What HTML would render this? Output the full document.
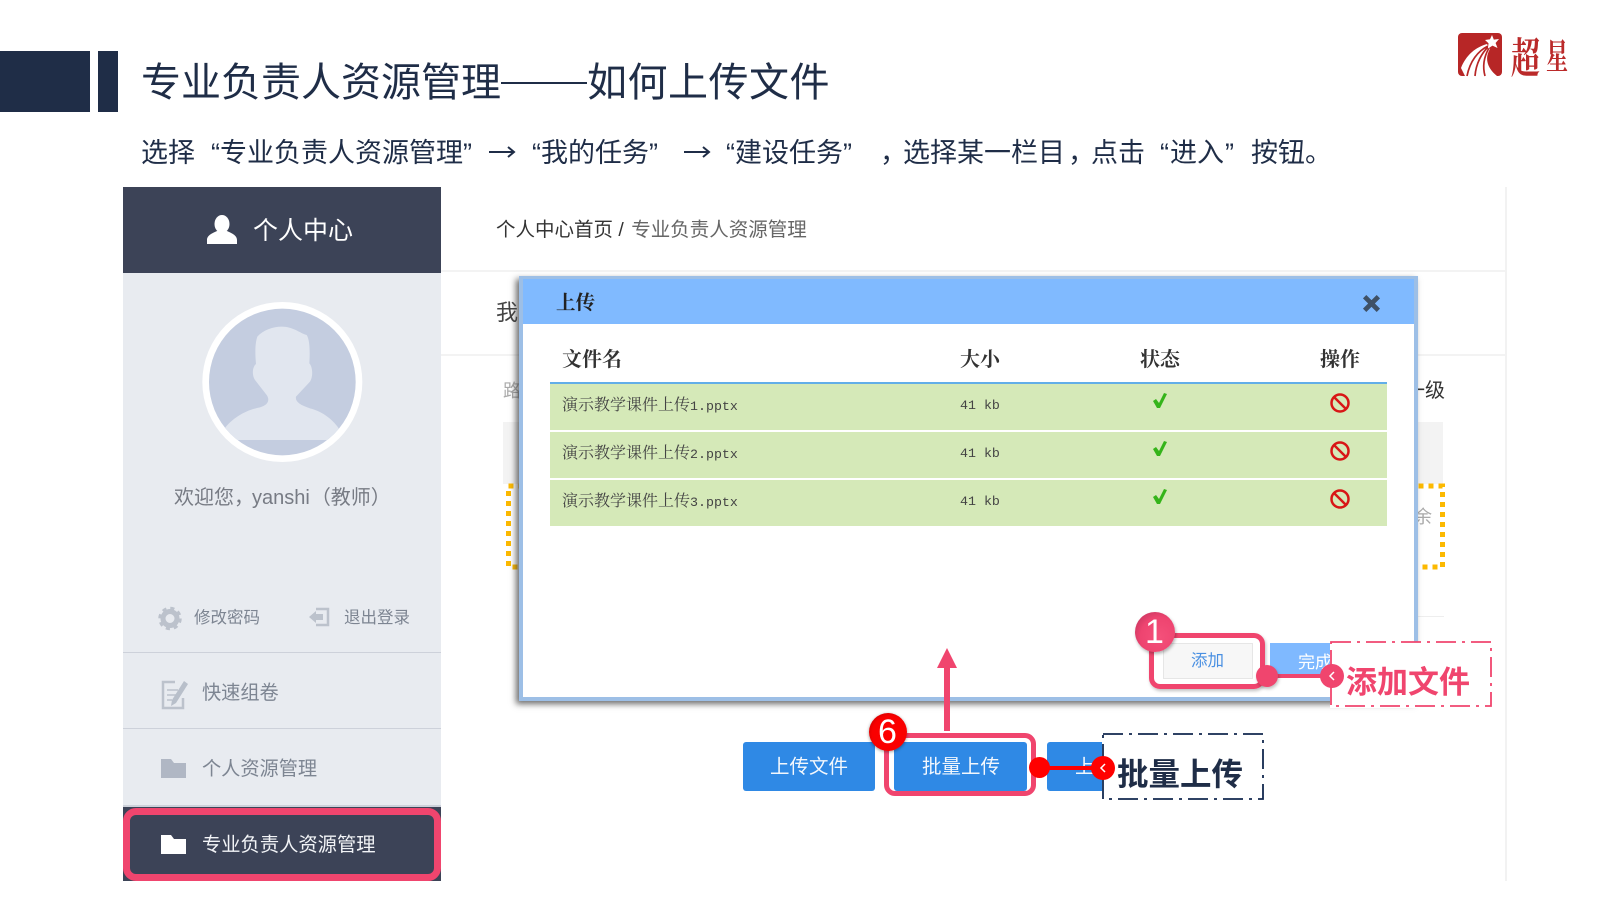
<!DOCTYPE html>
<html lang="zh">
<head>
<meta charset="utf-8">
<title>专业负责人资源管理——如何上传文件</title>
<style>
html,body{margin:0;padding:0;background:#fff}
#p{position:relative;width:1600px;height:900px;overflow:hidden;background:#fff;font-family:"Liberation Sans","Noto Sans CJK SC",sans-serif}
.t{position:absolute;white-space:nowrap;line-height:1}
.b{position:absolute}
svg{position:absolute;overflow:visible}
.th{font-family:"Noto Serif CJK SC",serif;font-weight:700;font-size:20px;color:#333}
.td{font-family:"Noto Serif CJK SC",serif;font-size:16px;color:#444}
.td i{font-style:normal;font-family:"Liberation Mono",monospace;font-size:13.3px}
.sub{font-size:27px;color:#1f2d47;font-weight:400}
</style>
</head>
<body>
<div id="p">
<div class="b" style="left:0;top:51px;width:90px;height:61px;background:#1f2d47"></div>
<div class="b" style="left:98px;top:51px;width:20px;height:61px;background:#1f2d47"></div>
<div class="t" style="left:141px;top:63px;font-size:40px;color:#1f2d47">专业负责人资源管理</div>
<div class="b" style="left:501px;top:82px;width:86px;height:2px;background:#1f2d47"></div>
<div class="t" style="left:587px;top:63px;font-size:40px;color:#1f2d47;letter-spacing:.5px">如何上传文件</div>

<div class="t sub" style="left:141px;top:140px">选择</div>
<div class="t sub" style="left:211px;top:140px">“专业负责人资源管理”</div>
<div class="t sub" style="left:532px;top:140px">“我的任务”</div>
<div class="t sub" style="left:726px;top:140px">“建设任务”</div>
<div class="t sub" style="left:880px;top:140px">，</div>
<div class="t sub" style="left:903px;top:140px">选择某一栏目</div>
<div class="t sub" style="left:1068px;top:140px">，</div>
<div class="t sub" style="left:1091px;top:140px">点击</div>
<div class="t sub" style="left:1160px;top:140px">“</div>
<div class="t sub" style="left:1170px;top:140px">进入</div>
<div class="t sub" style="left:1225px;top:140px">”</div>
<div class="t sub" style="left:1251px;top:140px">按钮。</div>
<svg style="left:0;top:0" width="1600" height="900" viewBox="0 0 1600 900">
<path d="M489 152H514M508 147L514 152L508 157" fill="none" stroke="#1f2d47" stroke-width="2"/>
<path d="M684 152H709M703 147L709 152L703 157" fill="none" stroke="#1f2d47" stroke-width="2"/>
</svg>

<!-- logo -->
<svg style="left:1458px;top:33px" width="44" height="43" viewBox="0 0 44 43">
<rect width="44" height="43" rx="4" fill="#b72626"/>
<path d="M3 35C8 22 18 14 29 11L32 16C27 24 28 34 39 43H7Z" fill="#fff"/>
<path d="M30 13C20 18 12 28 9 43M30 14C24 20 18 30 17 43M31 15C27 22 24 32 27 43" fill="none" stroke="#b72626" stroke-width="1.700"/>
<path d="M34 2L35.800 6.600 41 6 37.600 10 39.500 15 34.500 12.600 30 15.500 30.500 10.300 27 7 32 6.300Z" fill="#fff"/>
</svg>
<div class="t" style="left:1511px;top:42px;font-family:'Noto Serif CJK SC',serif;font-weight:700;font-size:29px;color:#bb2a2a;transform:scaleY(1.45);transform-origin:50% 50%">超</div>
<div class="t" style="left:1546px;top:45px;font-family:'Noto Serif CJK SC',serif;font-weight:700;font-size:22px;color:#bb2a2a;transform:scaleY(1.6);transform-origin:50% 50%">星</div>

<!-- content frame -->
<div class="b" style="left:441px;top:270px;width:1064px;height:2px;background:#f3f3f3"></div>
<div class="b" style="left:441px;top:354px;width:1064px;height:2px;background:#f3f3f3"></div>
<div class="b" style="left:1505px;top:187px;width:2px;height:694px;background:#f2f2f2"></div>
<div class="t" style="left:496px;top:221px;font-size:19.500px;color:#333">个人中心首页 / <span style="color:#666;margin-left:2px">专业负责人资源管理</span></div>
<div class="t" style="left:496px;top:302px;font-size:22px;color:#444">我的任务</div>
<div class="t" style="left:503px;top:382px;font-size:18px;color:#aaa">路径</div>
<div class="t" style="left:1405px;top:381px;font-size:20px;color:#333">一级</div>
<div class="b" style="left:503px;top:422px;width:940px;height:62px;background:#f3f3f3"></div>
<svg style="left:0;top:0" width="1600" height="900" viewBox="0 0 1600 900"><rect x="508.500" y="486" width="934" height="81" fill="none" stroke="#fcb900" stroke-width="5" stroke-dasharray="5 5"/></svg>
<div class="t" style="left:1414px;top:508px;font-size:18px;color:#aaa">余</div>
<div class="b" style="left:1418px;top:616px;width:26px;height:1px;background:#eee"></div>

<!-- sidebar -->
<div class="b" style="left:123px;top:187px;width:318px;height:694px;background:#e8ebf0"></div>
<div class="b" style="left:123px;top:187px;width:318px;height:86px;background:#3c4357"></div>
<svg style="left:0;top:0" width="1600" height="900" viewBox="0 0 1600 900">
<ellipse cx="222" cy="224" rx="7.500" ry="9" fill="#fff"/>
<path d="M207 244V240C207 235 213 233 217 231H227C231 233 237 235 237 240V244Z" fill="#fff"/>
</svg>
<div class="t" style="left:253px;top:219px;font-size:25px;color:#fff">个人中心</div>

<svg style="left:120px;top:180px" width="400" height="350" viewBox="0 0 1200 1050">
<defs><clipPath id="c"><circle cx="487" cy="606" r="220"/></clipPath></defs>
<circle cx="487" cy="606" r="240" fill="#fff"/>
<circle cx="487" cy="606" r="220" fill="#c4cde0"/>
<path clip-path="url(#c)" d="M485 440C520 440 540 460 560 465C570 480 570 520 568 550C578 560 580 590 570 605L528 650C525 665 540 675 570 685C610 695 640 720 660 750L660 780H310L310 750C340 710 380 690 420 682C445 675 450 660 440 645L405 600C395 585 397 560 408 552C405 520 405 490 412 470C430 450 460 440 485 440Z" fill="#e1e6ef"/>
</svg>
<div class="t" style="left:174px;top:488px;font-size:20px;color:#777b84">欢迎您，<span style="margin-left:-2px">yanshi</span><span style="margin-left:1px">（教师）</span></div>

<svg style="left:0;top:0" width="1600" height="900" viewBox="0 0 1600 900">
<circle cx="170" cy="618.500" r="7" fill="none" stroke="#bcc2cc" stroke-width="5"/>
<circle cx="170" cy="618.500" r="10" fill="none" stroke="#bcc2cc" stroke-width="3.500" stroke-dasharray="4 3.850"/>
<path d="M316 609H328V625H316" fill="none" stroke="#bcc2cc" stroke-width="2.500"/>
<path d="M309 617L316 611V614H323V620H316V623Z" fill="#bcc2cc"/>
<path d="M175 682H163V708H183V698" fill="none" stroke="#bcc2cc" stroke-width="2.500"/>
<path d="M167 690H178M167 695H176M167 700H172" stroke="#bcc2cc" stroke-width="1.500"/>
<path d="M175 682L183 682 183 688Z" fill="#e8ebf0"/>
<path d="M188 684L176 703L171 706L172 700L184 681Z" fill="#b8bfca"/>
<path d="M161 759H171L174 763H186V778H161Z" fill="#b0b7c4"/>
</svg>
<div class="t" style="left:194px;top:610px;font-size:16.500px;color:#7d8592">修改密码</div>
<div class="t" style="left:344px;top:610px;font-size:16.500px;color:#7d8592">退出登录</div>
<div class="b" style="left:123px;top:652px;width:318px;height:1px;background:#cdd1da"></div>
<div class="t" style="left:202px;top:684px;font-size:19.200px;color:#7d8592">快速组卷</div>
<div class="b" style="left:123px;top:728px;width:318px;height:1px;background:#cdd1da"></div>
<div class="t" style="left:202px;top:760px;font-size:19.200px;color:#7d8592">个人资源管理</div>
<div class="b" style="left:123px;top:805px;width:318px;height:2px;background:#cdd1da"></div>
<div class="b" style="left:123px;top:807px;width:318px;height:74px;background:#3c4357"></div>
<div class="b" style="left:123px;top:808px;width:318px;height:73px;box-sizing:border-box;border:7px solid #f0456e;border-radius:13px"></div>
<svg style="left:0;top:0" width="1600" height="900" viewBox="0 0 1600 900">
<path d="M161 835H171L174 839H186V854H161Z" fill="#fff"/>
</svg>
<div class="t" style="left:202px;top:836px;font-size:19.300px;color:#f2f4f7">专业负责人资源管理</div>

<!-- dialog -->
<div class="b" style="left:519px;top:276px;width:899px;height:425px;box-sizing:border-box;border:4px solid #9dbfe6;background:#fff;box-shadow:-3px 3px 6px rgba(60,60,60,.75)"></div>
<div class="b" style="left:523px;top:279px;width:891px;height:45px;background:#80baff"></div>
<div class="t" style="left:556px;top:292px;font-size:19.500px;color:#222;font-family:'Noto Serif CJK SC',serif;font-weight:700">上传</div>
<svg style="left:1362px;top:294px" width="19" height="19" viewBox="0 0 18 18"><path d="M2.500 2.500L15.500 15.500M15.500 2.500L2.500 15.500" stroke="#3f5166" stroke-width="4.500"/></svg>
<div class="t th" style="left:563px;top:348px;margin-left:-1px">文件名</div>
<div class="t th" style="left:960px;top:348px">大小</div>
<div class="t th" style="left:1140px;top:348px">状态</div>
<div class="t th" style="left:1320px;top:348px">操作</div>
<div class="b" style="left:550px;top:382px;width:837px;height:2px;background:#62aee8"></div>
<div class="b" style="left:550px;top:384px;width:837px;height:46px;background:#d5e9b8"></div>
<div class="b" style="left:550px;top:431.500px;width:837px;height:46.500px;background:#d5e9b8"></div>
<div class="b" style="left:550px;top:479.500px;width:837px;height:46.500px;background:#d5e9b8"></div>
<div class="t td" style="left:562px;top:396px">演示教学课件上传<i>1.pptx</i></div>
<div class="t td" style="left:562px;top:444px">演示教学课件上传<i>2.pptx</i></div>
<div class="t td" style="left:562px;top:492px">演示教学课件上传<i>3.pptx</i></div>
<div class="t td" style="left:960px;top:395px"><i>41&nbsp;kb</i></div>
<div class="t td" style="left:960px;top:443px"><i>41&nbsp;kb</i></div>
<div class="t td" style="left:960px;top:491px"><i>41&nbsp;kb</i></div>
<svg style="left:0;top:0" width="1600" height="900" viewBox="0 0 1600 900">
<g>
<path d="M1153 401L1156 399L1159 403L1164 393L1167 394L1160 408L1157 408Z" fill="#35b41a"/>
<circle cx="1340" cy="403" r="8.500" fill="none" stroke="#d81616" stroke-width="2.500"/>
<path d="M1334 397L1346 409" stroke="#d81616" stroke-width="2.500"/>
</g>
<g transform="translate(0 48)">
<path d="M1153 401L1156 399L1159 403L1164 393L1167 394L1160 408L1157 408Z" fill="#35b41a"/>
<circle cx="1340" cy="403" r="8.500" fill="none" stroke="#d81616" stroke-width="2.500"/>
<path d="M1334 397L1346 409" stroke="#d81616" stroke-width="2.500"/>
</g>
<g transform="translate(0 96)">
<path d="M1153 401L1156 399L1159 403L1164 393L1167 394L1160 408L1157 408Z" fill="#35b41a"/>
<circle cx="1340" cy="403" r="8.500" fill="none" stroke="#d81616" stroke-width="2.500"/>
<path d="M1334 397L1346 409" stroke="#d81616" stroke-width="2.500"/>
</g>
</svg>

<!-- add / finish -->
<div class="b" style="left:1163px;top:643px;width:90px;height:36px;box-sizing:border-box;background:#f7f7f7;border:1px solid #e6e6e6"></div>
<div class="t" style="left:1191px;top:653px;font-size:16.500px;color:#4a90e2">添加</div>
<div class="b" style="left:1270px;top:643px;width:70px;height:31px;background:#7fb9ff"></div>
<div class="t" style="left:1298px;top:654px;font-size:17px;color:#fff">完成</div>
<div class="b" style="left:1149px;top:633px;width:116px;height:56px;box-sizing:border-box;border:5px solid #f0456e;border-radius:11px;box-shadow:1px 2px 3px rgba(0,0,0,.25)"></div>
<div class="b" style="left:1262px;top:674px;width:70px;height:4px;background:#f0456e"></div>
<div class="b" style="left:1256px;top:665px;width:22px;height:22px;border-radius:50%;background:#f0456e;box-shadow:1px 2px 3px rgba(0,0,0,.25)"></div>

<!-- pink callout -->
<div class="b" style="left:1330px;top:642px;width:162px;height:66px;background:#fff"></div>
<svg style="left:1330px;top:641px" width="162" height="66" viewBox="0 0 162 66"><rect x="1" y="1" width="160" height="64" fill="none" stroke="#f0456e" stroke-width="1.800" stroke-dasharray="20 6 3 6"/></svg>
<div class="b" style="left:1320px;top:664px;width:24px;height:24px;border-radius:50%;background:#f0456e"></div>
<svg style="left:1327px;top:670px" width="10" height="12" viewBox="0 0 10 12"><path d="M7 2L3 6L7 10" fill="none" stroke="#fff" stroke-width="1.500"/></svg>
<div class="t" style="left:1346px;top:667px;font-size:31px;font-weight:700;color:#f0456e">添加文件</div>

<!-- badge 1 -->
<div class="b" style="left:1135px;top:612px;width:40px;height:40px;border-radius:50%;background:radial-gradient(circle at 62% 62%,#f4507a 0%,#ee4470 55%,#b52f58 100%);box-shadow:1px 2px 3px rgba(0,0,0,.3)"></div>
<div class="t" style="left:1145px;top:615px;font-size:34px;color:#fff">1</div>

<!-- arrow -->
<svg style="left:0;top:0" width="1600" height="900" viewBox="0 0 1600 900">
<path d="M947 648L957 668H950V731H944V668H937Z" fill="#f0456e"/>
</svg>

<!-- buttons -->
<div class="b" style="left:743px;top:742px;width:132px;height:49px;background:#2f89e5;border-radius:3px"></div>
<div class="t" style="left:770px;top:758px;font-size:19.500px;color:#f2f7fd">上传文件</div>
<div class="b" style="left:894px;top:742px;width:133px;height:49px;background:#2f89e5;border-radius:3px"></div>
<div class="t" style="left:922px;top:758px;font-size:19.500px;color:#f2f7fd">批量上传</div>
<div class="b" style="left:884px;top:733px;width:152px;height:63px;box-sizing:border-box;border:5px solid #f0456e;border-radius:11px"></div>
<div class="b" style="left:1047px;top:742px;width:60px;height:49px;background:#2f89e5;border-radius:3px"></div>
<div class="t" style="left:1075px;top:758px;font-size:19.500px;color:#f2f7fd">上</div>

<!-- navy callout -->
<div class="b" style="left:1102px;top:733px;width:162px;height:67px;background:#fff"></div>
<svg style="left:1102px;top:733px" width="162" height="67" viewBox="0 0 162 67"><rect x="1" y="1" width="160" height="65" fill="none" stroke="#12284f" stroke-width="1.800" stroke-dasharray="20 6 3 6"/></svg>
<div class="b" style="left:1039px;top:766px;width:64px;height:3.500px;background:#f00"></div>
<div class="b" style="left:1029px;top:757px;width:21px;height:21px;border-radius:50%;background:#f00"></div>
<div class="b" style="left:1091px;top:756px;width:24px;height:24px;border-radius:50%;background:#f00"></div>
<svg style="left:1098px;top:762px" width="10" height="12" viewBox="0 0 10 12"><path d="M7 2L3 6L7 10" fill="none" stroke="#fff" stroke-width="1.500"/></svg>
<div class="t" style="left:1117px;top:759px;font-size:31.500px;font-weight:700;color:#1f2d47">批量上传</div>

<!-- badge 6 -->
<div class="b" style="left:869px;top:713px;width:38px;height:38px;border-radius:50%;background:radial-gradient(circle at 55% 55%,#ff0000 0%,#f80000 60%,#a80000 100%);box-shadow:0 1px 3px rgba(0,0,0,.4)"></div>
<div class="t" style="left:878px;top:715px;font-size:34px;color:#fff">6</div>
</div>
</body>
</html>
